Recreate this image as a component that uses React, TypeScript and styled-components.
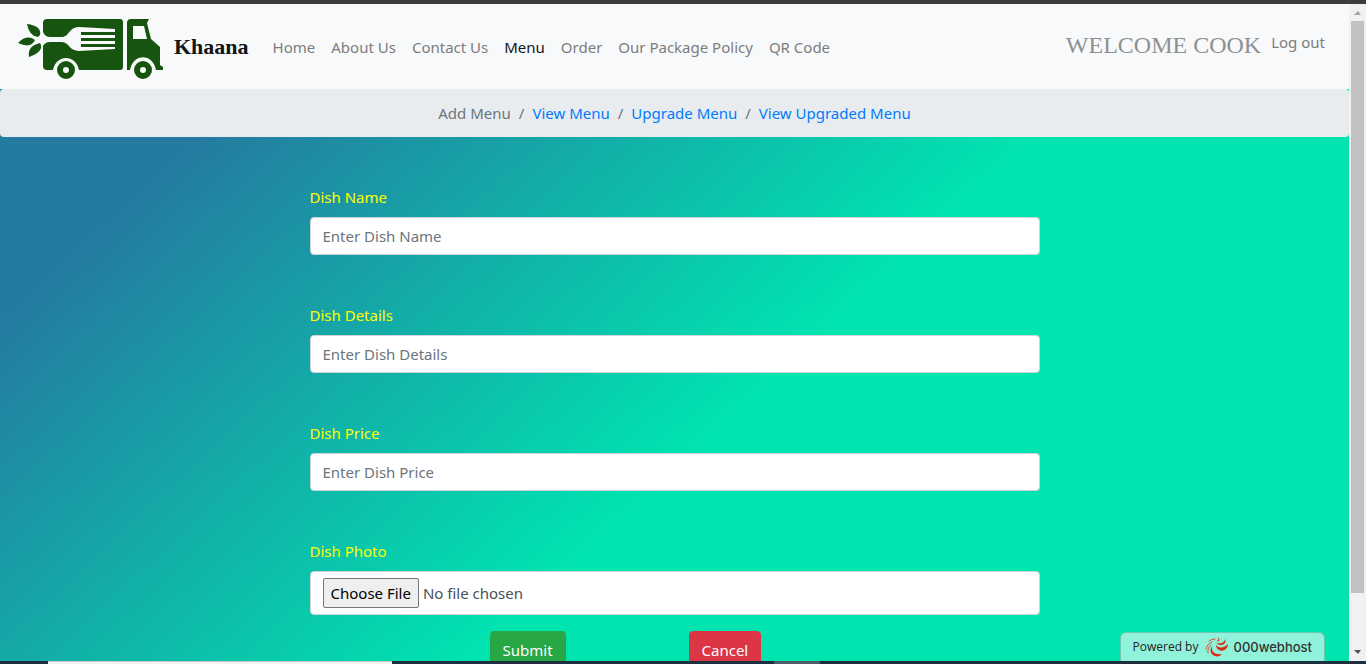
import React from "react";
import styled, { createGlobalStyle } from "styled-components";

const Global = createGlobalStyle`
  *, *::before, *::after { box-sizing: border-box; }
  body {
    margin: 0;
    font-family: "Noto Sans", "Segoe UI", sans-serif;
    font-size: 15px;
    line-height: 24px;
    color: #212529;
  }
`;

const Screen = styled.div`
  display: flex;
  flex-direction: column;
  height: 100vh;
  overflow: hidden;
`;

const TopEdge = styled.div`
  flex: none;
  height: 4px;
  background: #3c3c3c;
`;

const Taskbar = styled.div`
  flex: none;
  display: flex;
  height: 3px;
  padding-left: 48px;
  background: #1d2f3f;
`;

const TaskbarSearch = styled.div`
  width: 344px;
  background: #f3f3f3;
  border-top: 1px solid #c8c8c8;
`;

const TaskbarActive = styled.div`
  width: 46px;
  margin-left: 382px;
  background: #4b5c68;
`;

const Viewport = styled.div`
  position: relative;
  flex: 1;
  min-height: 0;
  display: flex;
`;

const Page = styled.div`
  flex: 1;
  min-width: 0;
  overflow: hidden;
  background: linear-gradient(137deg, #247ba0 235px, #00e4b0 802px);
`;

const Scrollbar = styled.div`
  flex: none;
  display: flex;
  flex-direction: column;
  align-items: center;
  justify-content: space-between;
  width: 17px;
  padding: 7px 2px 6px;
  background: #f1f1f1;
`;

const Thumb = styled.div`
  flex: 1;
  width: 13px;
  margin: 5px 0 57px;
  background: #c1c1c1;
`;

const Navbar = styled.nav`
  display: flex;
  align-items: center;
  height: 85px;
  padding: 0 16px;
  background: #f8f9fa;
`;

const Brand = styled.a`
  display: flex;
  align-items: center;
  gap: 10px;
  margin-right: 16px;
  font-family: "Liberation Serif", serif;
  font-size: 22px;
  font-weight: 700;
  line-height: 30px;
  color: #121416;
  text-decoration: none;
`;

const NavList = styled.ul`
  display: flex;
  flex: 1;
  margin: 0;
  padding: 0;
  list-style: none;
`;

const NavLink = styled.a<{ $active?: boolean }>`
  display: block;
  padding: 8px;
  color: ${(p) => (p.$active ? "#121314" : "#7c7d7d")};
  text-decoration: none;
  white-space: nowrap;
`;

const Account = styled.div`
  display: flex;
  align-items: flex-start;
  gap: 2px;
  padding-bottom: 10px;
`;

const Welcome = styled.span`
  padding-top: 8px;
  font-family: "Liberation Serif", serif;
  font-size: 24px;
  line-height: 30px;
  color: #8f9091;
  white-space: nowrap;
`;

const Breadcrumb = styled.ol`
  display: flex;
  justify-content: center;
  margin: 0;
  padding: 12px 16px;
  border-radius: 4px;
  background: #e9ecef;
  list-style: none;
`;

const Crumb = styled.li`
  color: #6c757d;
  & + &::before {
    content: "/";
    padding: 0 8px;
  }
`;

const CrumbLink = styled.a`
  color: #007bff;
  text-decoration: none;
`;

const Form = styled.form`
  width: 730px;
  max-width: 100%;
  margin: 0 auto;
  padding-top: 48px;
`;

const Field = styled.div`
  display: flex;
  flex-direction: column;
  gap: 8px;
  margin-bottom: 48px;
  &:last-of-type { margin-bottom: 16px; }
`;

const Label = styled.label`
  color: #ffff00;
  align-self: flex-start;
`;

const Input = styled.input`
  width: 100%;
  height: 38px;
  padding: 6px 12px;
  border: 1px solid #ced4da;
  border-radius: 4px;
  background: #fff;
  font: inherit;
  color: #495057;
  &::placeholder { color: #6c757d; opacity: 1; }
`;

const FileInput = styled(Input)`
  height: 44px;
  &::file-selector-button {
    height: 30px;
    padding: 0 7px;
    margin-right: 4px;
    border: 1px solid #767676;
    border-radius: 2px;
    background: #efefef;
    font: inherit;
    color: #000;
  }
`;

const Actions = styled.fieldset`
  display: flex;
  gap: 123px;
  margin: 0;
  padding: 0 0 0 180px;
  border: 0;
`;

const Button = styled.button<{ $tone: string }>`
  height: 38px;
  padding: 6px 12px;
  border: 1px solid ${(p) => p.$tone};
  border-radius: 4px;
  background: ${(p) => p.$tone};
  font: inherit;
  color: #fff;
`;

const HostBadge = styled.a`
  position: absolute;
  right: 41px;
  bottom: 0;
  display: flex;
  align-items: center;
  height: 29px;
  padding: 0 12px;
  border: 1px solid #6cc9b0;
  border-bottom: 0;
  border-radius: 6px 6px 0 0;
  background: #90f2da;
  font-family: "Open Sans", sans-serif;
  font-size: 12px;
  color: #222;
  text-decoration: none;
`;

const HostName = styled.span`
  font-family: Inter, sans-serif;
  font-size: 13px;
  font-weight: 500;
  color: #333;
`;

const Truck = () => (
  <svg width="148" height="72" viewBox="0 -6 148 72" aria-hidden="true">
    <g fill="#17540f">
      <path d="M11 7 Q26 9 24 18 L22 20 Q13 19 11 7Z" />
      <path d="M2 26 Q11 17 19 23 Q15 32 2 26Z" />
      <path d="M13 40 Q11 29 24 26 Q29 34 13 40Z" />
      <path d="M31 2 H104 Q107 2 107 5 V50 Q107 53 104 53 H63 C60 37 40 37 37 53 H31 Q27 53 27 49 V29 Q29 25 34 25 H46 C53 25 53 34 63 34 L99 32 V30 H65 V27 H99 V24 H65 V21 H99 V18 H65 V15 H99 V12 L63 10 C53 10 53 20 46 20 H34 Q29 20 27 15 V6 Q27 2 31 2Z" />
      <path fillRule="evenodd" d="M115 2 H133 L131 6 L135 22 L144 30 V48 L147 50 V53 H140 C137 36 117 36 114 53 H111 V6 Q111 2 115 2Z M117 9 V22 H131 L128 9Z" />
      <path fillRule="evenodd" d="M50 44 A9 9 0 1 1 50 62 A9 9 0 1 1 50 44Z M50 50 A3 3 0 1 0 50 56 A3 3 0 1 0 50 50Z" />
      <path fillRule="evenodd" d="M127 44 A9 9 0 1 1 127 62 A9 9 0 1 1 127 44Z M127 50 A3 3 0 1 0 127 56 A3 3 0 1 0 127 50Z" />
    </g>
  </svg>
);

const HostMark = styled.svg`
  margin: 0 4px 0 7px;
`;

const Arrow = ({ up, color }: { up?: boolean; color: string }) => (
  <svg width="7" height="5" viewBox="0 0 7 5" aria-hidden="true">
    <path d={up ? "M0 4 L4 0 L7 4Z" : "M0 0 L4 4 L7 0Z"} fill={color} />
  </svg>
);

const navItems = ["Home", "About Us", "Contact Us", "Menu", "Order", "Our Package Policy", "QR Code"];
const fields = ["Dish Name", "Dish Details", "Dish Price"];

export default function App() {
  return (
    <Screen>
      <Global />
      <TopEdge />
      <Viewport>
        <Page>
          <Navbar>
            <Brand href="#">
              <Truck />
              Khaana
            </Brand>
            <NavList>
              {navItems.map((item) => (
                <li key={item}>
                  <NavLink href="#" $active={item === "Menu"}>{item}</NavLink>
                </li>
              ))}
            </NavList>
            <Account>
              <Welcome>WELCOME COOK</Welcome>
              <NavLink href="#">Log out</NavLink>
            </Account>
          </Navbar>
          <Breadcrumb>
            <Crumb>Add Menu</Crumb>
            {["View Menu", "Upgrade Menu", "View Upgraded Menu"].map((item) => (
              <Crumb key={item}>
                <CrumbLink href="#">{item}</CrumbLink>
              </Crumb>
            ))}
          </Breadcrumb>
          <Form>
            {fields.map((name) => (
              <Field key={name}>
                <Label htmlFor={name}>{name}</Label>
                <Input id={name} type="text" placeholder={`Enter ${name}`} />
              </Field>
            ))}
            <Field>
              <Label htmlFor="photo">Dish Photo</Label>
              <FileInput id="photo" type="file" />
            </Field>
            <Actions>
              <Button type="submit" $tone="#28a745">Submit</Button>
              <Button type="reset" $tone="#dc3545">Cancel</Button>
            </Actions>
          </Form>
        </Page>
        <Scrollbar>
          <Arrow up color="#a3a3a3" />
          <Thumb />
          <Arrow color="#505050" />
        </Scrollbar>
        <HostBadge href="#">
          Powered by
          <HostMark width="24" height="20" viewBox="0 0 24 20" aria-hidden="true">
            <g fill="#dc2a12">
              <path d="M7 9 C6 15 10 18 17 17 C15 20 10 20 8 18 C5 16 5 11 7 9Z" />
              <path d="M11 8 C15 12 19 11 23 7 C23 12 18 15 14 13 C12 12 11 10 11 8Z" />
              <path d="M12 6 C17 7 20 5 20 2 C22 5 19 8 16 8 C14 8 12 7 12 6Z" />
              <path d="M11 4 C13 4 14 3 13 0 C16 3 14 5 11 4Z" />
            </g>
            <g fill="none" stroke="#dc4a32" strokeLinecap="round">
              <path d="M6 8 Q2 11 3 16 M7 5 Q2 7 1 12 M10 2 Q6 2 4 4" />
            </g>
          </HostMark>
          <HostName>000webhost</HostName>
        </HostBadge>
      </Viewport>
      <Taskbar>
        <TaskbarSearch />
        <TaskbarActive />
      </Taskbar>
    </Screen>
  );
}
